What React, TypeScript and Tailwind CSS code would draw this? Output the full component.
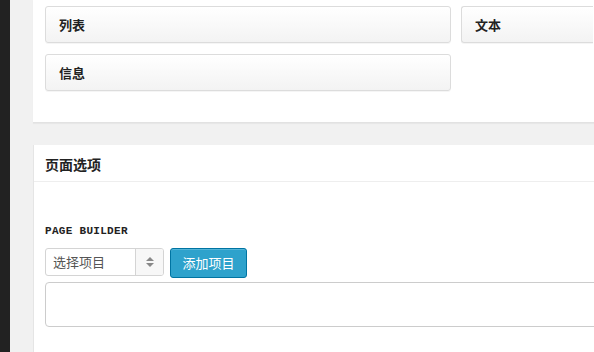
import React from 'react';

const cjk = { fontFamily: '"Noto Sans CJK SC", "Liberation Sans", sans-serif' };

const Card: React.FC<{ label: string; className?: string }> = ({ label, className }) => (
  <div
    className={`h-[37px] flex items-center pl-[13px] rounded-[3px] border border-[#dcdcdc] bg-gradient-to-b from-white to-[#f3f3f3] shadow-[0_1px_0_rgba(0,0,0,0.04)] ${className ?? ''}`}
  >
    <span className="text-[13px] font-bold text-[#222]">{label}</span>
  </div>
);

const App: React.FC = () => {
  return (
    <div className="w-[594px] h-[352px] overflow-hidden flex bg-[#f1f1f1]" style={cjk}>
      {/* Sidebar strip */}
      <div className="w-[10px] shrink-0 bg-[#222]" />

      {/* Main area */}
      <div className="flex-1 pl-[23px] overflow-hidden">
        {/* Top panel with cards */}
        <div className="w-[620px] h-[123px] bg-white border-b border-[#e2e2e2] shadow-[0_1px_1px_rgba(0,0,0,0.04)] pt-[6px] pl-[12px]">
          <div className="grid grid-cols-[406px_132px] gap-x-[10px] gap-y-[11px]">
            <Card label="列表" />
            <Card label="文本" className="border-r-0 rounded-r-none" />
            <Card label="信息" />
          </div>
        </div>

        {/* Page options panel */}
        <div className="w-[620px] h-[220px] mt-[22px] bg-white border-l border-[#e5e5e5]">
          <div className="h-[37px] flex items-center pl-[11px] pt-[2px] border-b border-[#eeeeee]">
            <span className="text-[14px] font-bold text-[#222]">页面选项</span>
          </div>

          <div className="pl-[11px] pt-[42px]">
            <div
              className="text-[11px] font-bold tracking-[0.3px] text-[#222] leading-[14px]"
              style={{ fontFamily: '"Liberation Mono", monospace' }}
            >
              PAGE BUILDER
            </div>

            <div className="flex items-start gap-[6px] mt-[10px]">
              {/* Select */}
              <div className="w-[119px] h-[28px] flex rounded-[3px] border border-[#d4d4d4] bg-white overflow-hidden">
                <div className="flex-1 flex items-center pl-[7px] text-[13px] text-[#555]">选择项目</div>
                <div className="w-[28px] flex flex-col items-center justify-center gap-[2px] bg-[#f7f7f7] border-l border-[#d4d4d4]">
                  <div className="w-0 h-0 border-l-[4px] border-r-[4px] border-b-[4px] border-l-transparent border-r-transparent border-b-[#888]" />
                  <div className="w-0 h-0 border-l-[4px] border-r-[4px] border-t-[4px] border-l-transparent border-r-transparent border-t-[#888]" />
                </div>
              </div>

              {/* Add button */}
              <button className="w-[77px] h-[30px] rounded-[3px] border border-[#0074a2] bg-[#2ea2cc] text-white text-[13px] shadow-[inset_0_1px_0_rgba(120,200,230,0.5)]">
                添加项目
              </button>
            </div>

            {/* Textarea-like box */}
            <div className="w-[620px] h-[45px] mt-[4px] rounded-[4px] border border-[#cccccc] bg-white" />
          </div>
        </div>
      </div>
    </div>
  );
};

export default App;
